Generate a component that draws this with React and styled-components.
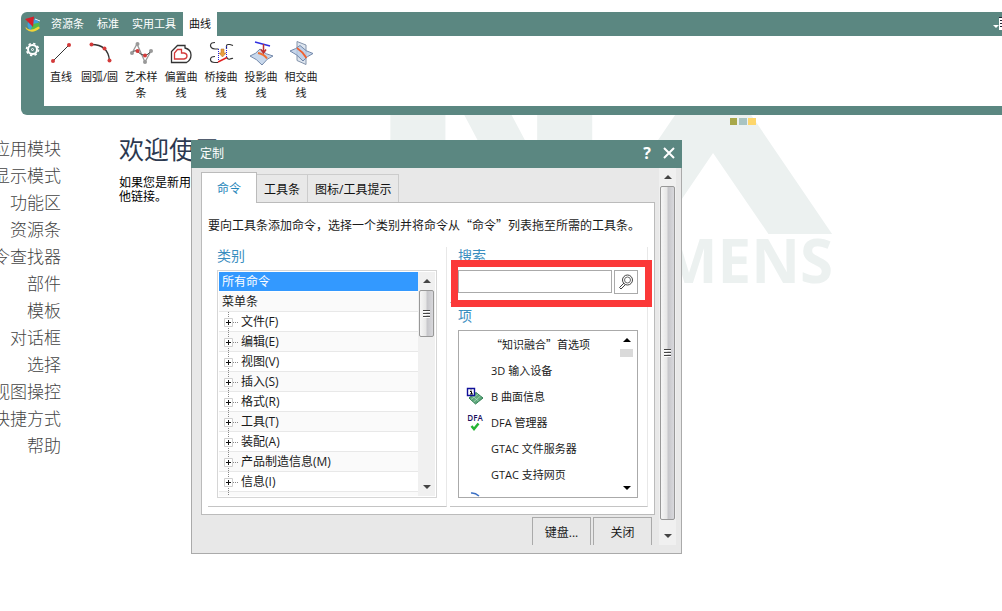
import React from 'react';
import styled, { createGlobalStyle } from 'styled-components';

const GlobalStyle = createGlobalStyle`
  * {
    box-sizing: border-box;
  }
  body {
    margin: 0;
    background: #fff;
    color: #1a1a1a;
    font-family: "Open Sans", "Noto Sans CJK SC", sans-serif;
    font-size: 12px;
  }
  button,
  input {
    margin: 0;
    padding: 0;
    border: 0;
    border-radius: 0;
    background: none;
    color: inherit;
    font: inherit;
  }
  ul {
    margin: 0;
    padding: 0;
    list-style: none;
  }
  svg {
    display: block;
    flex: none;
  }
`;

const Page = styled.div`
  display: flex;
  flex-direction: column;
  min-height: 100vh;
  padding-top: 12px;
  overflow: hidden;
`;

/* ribbon */
const Ribbon = styled.header`
  display: grid;
  grid-template-columns: 23px 1fr;
  grid-template-rows: 24px auto;
  margin-left: 21px;
  padding-bottom: 9px;
  border-radius: 6px 0 0 6px;
  background: #5b8781;
`;
const Corner = styled.div`
  display: flex;
  align-items: center;
  justify-content: center;
`;
const RibbonTabs = styled.nav`
  display: flex;
  gap: 1px;
  padding-left: 1px;
`;
const RibbonTab = styled.button`
  padding: 0 6px;
  background: ${(p) => (p.$active ? '#fff' : 'transparent')};
  color: ${(p) => (p.$active ? '#111' : '#fff')};
  font-size: 11px;
  line-height: 24px;
`;
const RibbonMenu = styled.button`
  margin-left: auto;
`;
const GearButton = styled.button`
  display: flex;
  justify-content: center;
  padding-top: 6px;
`;
const Tools = styled.div`
  display: flex;
  min-height: 70px;
  background: #fff;
`;
const Tool = styled.button`
  display: flex;
  flex-direction: column;
  align-items: center;
  gap: 3px;
  width: ${(p) => p.$width || 40}px;
  padding-top: 4px;
  font-size: 11px;
  line-height: 16px;
`;

/* start page */
const Workspace = styled.main`
  position: relative;
  flex: 1;
  display: flex;
  gap: 58px;
  overflow: hidden;
`;
const Watermark = styled.svg`
  position: absolute;
  top: 0;
  left: 380px;
  z-index: -1;
`;
const Sidebar = styled.nav`
  display: flex;
  flex-direction: column;
  align-items: flex-end;
  width: 61px;
  padding-top: 20px;
`;
const SideLink = styled.a`
  color: #444;
  font-size: 17px;
  font-weight: 300;
  line-height: 27px;
  text-decoration: none;
  white-space: nowrap;
`;
const Welcome = styled.section`
  padding-top: 16px;
`;
const Heading = styled.h1`
  margin: 0 0 9px;
  color: #2c3950;
  font-size: 25px;
  font-weight: 400;
  line-height: 36px;
`;
const Intro = styled.p`
  margin: 0;
  color: #000;
  line-height: 14px;
`;

/* dialog */
const Dialog = styled.section`
  position: absolute;
  top: 25px;
  left: 191px;
  width: 491px;
`;
const TitleBar = styled.header`
  display: flex;
  align-items: center;
  height: 28px;
  padding: 0 2px 2px 9px;
  background: #5b8781;
  color: #fff;
`;
const Title = styled.h2`
  flex: 1;
  margin: 0;
  font-size: 12px;
  font-weight: 400;
`;
const TitleButton = styled.button`
  display: flex;
  align-items: center;
  justify-content: center;
  width: 22px;
  height: 22px;
  font-size: 16px;
  font-weight: 700;
`;
const DialogBody = styled.div`
  display: flex;
  gap: 4px;
  padding: 0 5px 8px 9px;
  border: 1px solid #aaa;
  border-top: 0;
  background: #e8e8e8;
`;
const Content = styled.div`
  flex: 1;
  padding-top: 4px;
`;
const Tabs = styled.div`
  display: flex;
  align-items: flex-end;
  height: 30px;
`;
const Tab = styled.button`
  position: relative;
  height: ${(p) => (p.$active ? 31 : 28)}px;
  margin-bottom: ${(p) => (p.$active ? -1 : 0)}px;
  padding: 0 ${(p) => (p.$active ? 15 : 7)}px;
  border: 1px solid ${(p) => (p.$active ? '#bbb' : '#ccc')};
  border-bottom: 0;
  border-left-width: ${(p) => (p.$active ? 1 : 0)}px;
  background: ${(p) => (p.$active ? '#fff' : '#e8e8e8')};
  color: ${(p) => (p.$active ? '#2585ba' : '#111')};
`;
const Panel = styled.div`
  padding: 12px 6px 7px;
  border: 1px solid #bbb;
  background: #fff;
`;
const Hint = styled.p`
  margin: 0 0 12px;
  font-family: "Noto Sans CJK SC", sans-serif;
  line-height: 20px;
  white-space: nowrap;
`;
const Columns = styled.div`
  display: grid;
  grid-template-columns: 239px 198px;
  gap: 3px;
`;
const Group = styled.section`
  position: relative;
  padding: ${(p) => p.$top || 0}px 9px 8px ${(p) => p.$left || 8}px;
  border-right: 1px solid #e8e8e8;
  border-bottom: 1px solid #c4c4c4;
`;
const Label = styled.label`
  display: block;
  margin-bottom: 5px;
  color: #3a8ebf;
  font-size: 14px;
  line-height: 18px;
`;
const ListBox = styled.div`
  display: flex;
  height: 228px;
  padding: 1px;
  border: 1px solid #d6d6d6;
`;
const TreeList = styled.ul`
  flex: 1;
  overflow: hidden;
`;
const TreeRow = styled.li`
  display: flex;
  align-items: center;
  gap: 2px;
  height: 20px;
  padding-left: ${(p) => (p.$root ? 3 : 0)}px;
  border-bottom: 1px solid #e8e8e8;
  background: #fff;
  line-height: 19px;

  &:nth-child(even) {
    background: #fafafa;
  }
  &:first-child {
    border-color: #fff;
    background: #3399ff;
    color: #fff;
  }
`;
const SearchRow = styled.div`
  display: flex;
  gap: 2px;
`;
const SearchInput = styled.input`
  flex: 1;
  min-width: 0;
  height: 23px;
  padding: 0 4px;
  border: 1px solid #aaa;
  background: #fff;
`;
const SearchButton = styled.button`
  display: flex;
  align-items: center;
  justify-content: center;
  width: 24px;
  height: 24px;
  border: 1px solid #aaa;
`;
const Highlight = styled.div`
  position: absolute;
  top: 13px;
  left: 1px;
  z-index: 1;
  width: 201px;
  height: 47px;
  border: 7px solid #fb3838;
  pointer-events: none;
`;
const ItemBox = styled.div`
  display: flex;
  height: 168px;
  padding-right: 3px;
  border: 1px solid #aaa;
`;
const ItemList = styled.ul`
  flex: 1;
  overflow: hidden;
`;
const ItemRow = styled.li`
  display: flex;
  align-items: center;
  height: 26px;
  font-family: ${(p) => (p.$quoted ? '"Noto Sans CJK SC", sans-serif' : 'inherit')};
  font-size: 11px;
  white-space: nowrap;
`;
const IconCell = styled.span`
  display: flex;
  justify-content: center;
  width: 32px;
`;
const Dfa = styled.span`
  display: flex;
  flex-direction: column;
  align-items: center;
  color: #201060;
  font-size: 8px;
  font-weight: 600;
  line-height: 8px;
`;
const Footer = styled.footer`
  display: flex;
  justify-content: flex-end;
  gap: 2px;
  padding: 2px 3px 0 0;
`;
const FooterButton = styled.button`
  width: 59px;
  height: 28px;
  border: 1px solid #aaa;
  border-bottom: 0;
`;

/* scroll bars */
const Bar = styled.div`
  display: flex;
  flex-direction: column;
  width: ${(p) => p.$width}px;
  padding: 0 1px;
  background: ${(p) => (p.$flat ? '#fff' : '#f0f0f0')};
`;
const Arrow = styled.button`
  display: flex;
  align-items: center;
  justify-content: center;
  height: 18px;
`;
const Track = styled.div`
  flex: 1;
`;
const Thumb = styled.div`
  display: flex;
  flex-direction: column;
  align-items: center;
  justify-content: center;
  gap: 1px;
  height: ${(p) => p.$size}px;
  border: ${(p) => (p.$flat ? '0' : '1px solid #989898')};
  border-radius: ${(p) => (p.$flat ? 0 : 2)}px;
  background: ${(p) => (p.$flat ? '#dadada' : 'linear-gradient(to right, #f6f6f6, #e6e6e6 45%, #c6c6ca 55%, #d8d8dc)')};
`;
const Grip = styled.i`
  width: 7px;
  height: 2px;
  border-bottom: 1px solid #fff;
  background: #444;
`;

function ScrollBar({ width, size, flat }) {
  return (
    <Bar $width={width} $flat={flat}>
      <Arrow aria-label="up">
        <svg width="8" height="4"><path d="M0 4 4 0 8 4z" fill={flat ? '#000' : '#444'} /></svg>
      </Arrow>
      <Thumb $size={size} $flat={flat}>
        {!flat && [0, 1, 2].map((n) => <Grip key={n} />)}
      </Thumb>
      <Track />
      <Arrow aria-label="down">
        <svg width="8" height="4"><path d="M0 0h8L4 4z" fill={flat ? '#000' : '#444'} /></svg>
      </Arrow>
    </Bar>
  );
}

const dots = (points, fill) => points.map(([x, y]) => (
  <circle key={`${x}-${y}`} cx={x} cy={y} r="2" fill={fill} />
));

const tools = [
  {
    label: '直线',
    width: 34,
    icon: (
      <>
        <path d="M5 21 21 5" stroke="#333" />
        {dots([[5, 21], [21, 5]], '#d33a3a')}
      </>
    ),
  },
  {
    label: '圆弧/圆',
    width: 43,
    icon: (
      <>
        <path d="M4.5 4.5Q21 4.5 22.5 20.5" stroke="#333" strokeWidth="1.3" />
        {dots([[4.5, 4.5], [17.5, 8.5], [22.5, 20.5]], '#d33a3a')}
      </>
    ),
  },
  {
    label: '艺术样条',
    icon: (
      <>
        <path d="M4 13 9 4 17 22 23 11" stroke="#999" strokeWidth="1.3" />
        <path d="M4 13Q7 9 10 12T17 15.5Q20 15 23 11" stroke="#444" />
        {dots([[4, 13], [9.5, 4], [17, 22], [23, 11]], '#999')}
        {dots([[9.5, 11], [17, 15.5]], '#d33a3a')}
      </>
    ),
  },
  {
    label: '偏置曲线',
    icon: (
      <>
        <path d="M3.5 22.5V11.5L9.500 5.500H17V8Q23 9.500 23 15 23 20 18.500 22.500Z" stroke="#333" strokeWidth="1.300" />
        <path d="M6.500 19V13L9.500 9.500H13.500V13H16Q19 13.500 19 16T16 19Z" stroke="#d33a3a" strokeWidth="1.300" />
      </>
    ),
  },
  {
    label: '桥接曲线',
    icon: (
      <>
        <path d="M7 2.500Q2.500 2.500 2.500 5.500T7 9H10.500M7 16.500Q2.500 16.500 2.500 19.500T7 22.500H10M18.500 9V6Q18.500 4.500 20 4.500H22L25 5.500M18.500 17Q20 20 22 19T25 18.500" stroke="#333" strokeWidth="1.200" />
        <path d="M10.500 9V22M18.500 6V18" stroke="#2222dd" strokeDasharray="1 1" />
        <path d="M10 22 19 17.500" stroke="#e02020" strokeWidth="1.500" />
        <path d="M13 9h3v4h2l-3.500 4-3.500-4h2z" fill="#e8a040" stroke="#b66a20" strokeWidth=".5" />
      </>
    ),
  },
  {
    label: '投影曲线',
    icon: (
      <>
        <path d="M2 16Q8 14 12 9 18 15 25 16 19 18 14 25 9 19 2 16Z" fill="#c8d8ec" stroke="#7288aa" />
        <path d="M10 13Q16 14 19 18.500" stroke="#f07030" strokeWidth="2" />
        <path d="M7 2 22 6" stroke="#3030e0" strokeWidth="1.500" />
        <path d="M15.500 4V12M13 9.500 15.500 13 18 9.500" stroke="#c03030" strokeWidth="1.500" />
      </>
    ),
  },
  {
    label: '相交曲线',
    icon: (
      <>
        <path d="M9 1.500 18 5V24.500L9 20.500Z" fill="#dde5ef" stroke="#8494ac" />
        <path d="M2 11Q8 9 12 5.500 18 12 25 13.500 19 16 15 21 9 14 2 11Z" fill="#b9cce6" fillOpacity=".8" stroke="#7288aa" />
        <path d="M9 8Q15 12 18.500 18" stroke="#f06030" strokeWidth="1.800" />
      </>
    ),
  },
];

const sideLinks = ['应用模块', '显示模式', '功能区', '资源条', '命令查找器', '部件', '模板', '对话框', '选择', '视图操控', '快捷方式', '帮助'];

const menus = ['文件(F)', '编辑(E)', '视图(V)', '插入(S)', '格式(R)', '工具(T)', '装配(A)', '产品制造信息(M)', '信息(I)', ''];

const surfaceIcon = (
  <svg width="18" height="18" fill="none">
    <path d="M3 11 10 5.500 17 11 9.500 17Z" fill="#5fa97c" stroke="#2f7d52" />
    <path d="M5 12.500 12 7M7.500 15 14.500 9M6 8.500 12.500 14" stroke="#b6dcc4" strokeWidth=".7" />
    <path d="M1.500 1.500h7v7h-7z" fill="#fff" stroke="#10109a" strokeWidth="1.400" />
    <path d="M4 4.500h1.500V7M4 7h3M5 2.500v1" stroke="#000" />
  </svg>
);
const dfaIcon = (
  <Dfa>
    DFA
    <svg width="10" height="9" fill="none"><path d="M1.500 4 4 7 8.500 1.500" stroke="#25b535" strokeWidth="2.500" /></svg>
  </Dfa>
);
const curveIcon = (
  <svg width="18" height="18" fill="none"><path d="M5 2Q9 1.500 13 5" stroke="#3a6fc4" strokeWidth="1.500" /></svg>
);

const items = [
  { text: '“知识融合”首选项', quoted: true },
  { text: '3D 输入设备' },
  { text: 'B 曲面信息', icon: surfaceIcon },
  { text: 'DFA 管理器', icon: dfaIcon },
  { text: 'GTAC 文件服务器' },
  { text: 'GTAC 支持网页' },
  { text: '', icon: curveIcon },
];

function Expander() {
  return (
    <button type="button" aria-label="+">
      <svg width="20" height="20" fill="none">
        <path d="M9.500 0V20M14 10.500H19" stroke="#888" strokeDasharray="1 1" />
        <path d="M5.500 6.500h8v8h-8z" fill="#fff" stroke="#d0d0d0" />
        <path d="M7 10.500h5M9.500 8v5" stroke="#111" />
      </svg>
    </button>
  );
}

function AppLogo() {
  return (
    <svg width="17" height="17" fill="none">
      <circle cx="9.500" cy="9" r="6" fill="#3da1dc" />
      <path d="M9 8 15.500 6.500V12L11 15.500 7 13Z" fill="#55b948" />
      <path d="M1.500 11Q6 16.500 14.500 10.500L16 12Q8 19 2 13Z" fill="#f2d338" />
      <path d="M1 3 10 .5 9 11Z" fill="#d3202a" />
      <path d="M11 3 16 5" stroke="#e6f4ff" />
    </svg>
  );
}

function RibbonBar() {
  return (
    <Ribbon>
      <Corner><AppLogo /></Corner>
      <RibbonTabs>
        <RibbonTab>资源条</RibbonTab>
        <RibbonTab>标准</RibbonTab>
        <RibbonTab>实用工具</RibbonTab>
        <RibbonTab $active>曲线</RibbonTab>
        <RibbonMenu aria-label="menu">
          <svg width="9" height="16">
            <path d="M0 9h6L3 12z" fill="#fff" />
            <path d="M6 2h3v12H6z" fill="#fff" />
            <path d="M6 1h3v1H6zM7 4h2v1H7zM7 7h2v1H7zM7 10h2v1H7z" fill="#223" />
          </svg>
        </RibbonMenu>
      </RibbonTabs>
      <GearButton aria-label="settings">
        <svg width="15" height="15" fill="none" stroke="#fff">
          <circle cx="7.500" cy="7.500" r="4.500" strokeWidth="2" />
          <circle cx="7.500" cy="7.500" r="6" strokeWidth="1.600" strokeDasharray="2.350 2.350" />
          <circle cx="7.500" cy="7.500" r="1" strokeWidth="1" />
        </svg>
      </GearButton>
      <Tools>
        {tools.map((tool) => (
          <Tool key={tool.label} $width={tool.width}>
            <svg width="26" height="26" fill="none">{tool.icon}</svg>
            {tool.label}
          </Tool>
        ))}
      </Tools>
    </Ribbon>
  );
}

function CustomizeDialog() {
  return (
    <Dialog role="dialog" aria-labelledby="dialog-title">
      <TitleBar>
        <Title id="dialog-title">定制</Title>
        <TitleButton>?</TitleButton>
        <TitleButton aria-label="close">
          <svg width="12" height="12"><path d="M1 1 11 11M11 1 1 11" stroke="#fff" strokeWidth="2" /></svg>
        </TitleButton>
      </TitleBar>
      <DialogBody>
        <Content>
          <Tabs>
            <Tab $active>命令</Tab>
            <Tab>工具条</Tab>
            <Tab>图标/工具提示</Tab>
          </Tabs>
          <Panel>
            <Hint>要向工具条添加命令，选择一个类别并将命令从“命令”列表拖至所需的工具条。</Hint>
            <Columns>
              <Group $left={9}>
                <Label as="div">类别</Label>
                <ListBox>
                  <TreeList>
                    <TreeRow $root>所有命令</TreeRow>
                    <TreeRow $root>菜单条</TreeRow>
                    {menus.map((name) => (
                      <TreeRow key={name}>
                        <Expander />
                        {name}
                      </TreeRow>
                    ))}
                  </TreeList>
                  <ScrollBar width={17} size={47} />
                </ListBox>
              </Group>
              <div>
                <Group>
                  <Label htmlFor="search">搜索</Label>
                  <SearchRow>
                    <SearchInput id="search" type="text" />
                    <SearchButton aria-label="search">
                      <svg width="16" height="16" fill="none" stroke="#444">
                        <circle cx="9.500" cy="6" r="5" />
                        <circle cx="9.500" cy="6" r="3" strokeWidth=".8" />
                        <path d="M6 9 1.500 13.500 3 15 7.500 10.500" />
                      </svg>
                    </SearchButton>
                  </SearchRow>
                  <Highlight />
                </Group>
                <Group $top={4}>
                  <Label as="div">项</Label>
                  <ItemBox>
                    <ItemList>
                      {items.map((item) => (
                        <ItemRow key={item.text} $quoted={item.quoted}>
                          <IconCell>{item.icon}</IconCell>
                          {item.text}
                        </ItemRow>
                      ))}
                    </ItemList>
                    <ScrollBar width={15} size={8} flat />
                  </ItemBox>
                </Group>
              </div>
            </Columns>
          </Panel>
          <Footer>
            <FooterButton>键盘...</FooterButton>
            <FooterButton>关闭</FooterButton>
          </Footer>
        </Content>
        <ScrollBar width={17} size={334} />
      </DialogBody>
    </Dialog>
  );
}

function App() {
  return (
    <>
      <GlobalStyle />
      <Page>
        <RibbonBar />
        <Workspace>
          <Watermark width="460" height="180" fill="#ecf1f0" fontWeight="700" aria-hidden="true">
            <text x="-18" y="119" fontFamily="DejaVu Sans" fontSize="309">N</text>
            <text x="208" y="119" fontFamily="DejaVu Sans" fontSize="325">X</text>
            <text x="453" y="168" fontFamily="Open Sans" fontSize="60" textAnchor="end">SIEMENS</text>
            <path d="M350 3h7v7h-7z" fill="#a8a84a" />
            <path d="M359 3h8v7h-8z" fill="#a9c4c2" />
            <path d="M368 3h8v7h-8z" fill="#fdd66c" />
          </Watermark>
          <Sidebar>
            {sideLinks.map((link) => <SideLink key={link} href="#">{link}</SideLink>)}
          </Sidebar>
          <Welcome>
            <Heading>欢迎使用</Heading>
            <Intro>
              如果您是新用
              <br />
              他链接。
            </Intro>
          </Welcome>
          <CustomizeDialog />
        </Workspace>
      </Page>
    </>
  );
}

export default App;
